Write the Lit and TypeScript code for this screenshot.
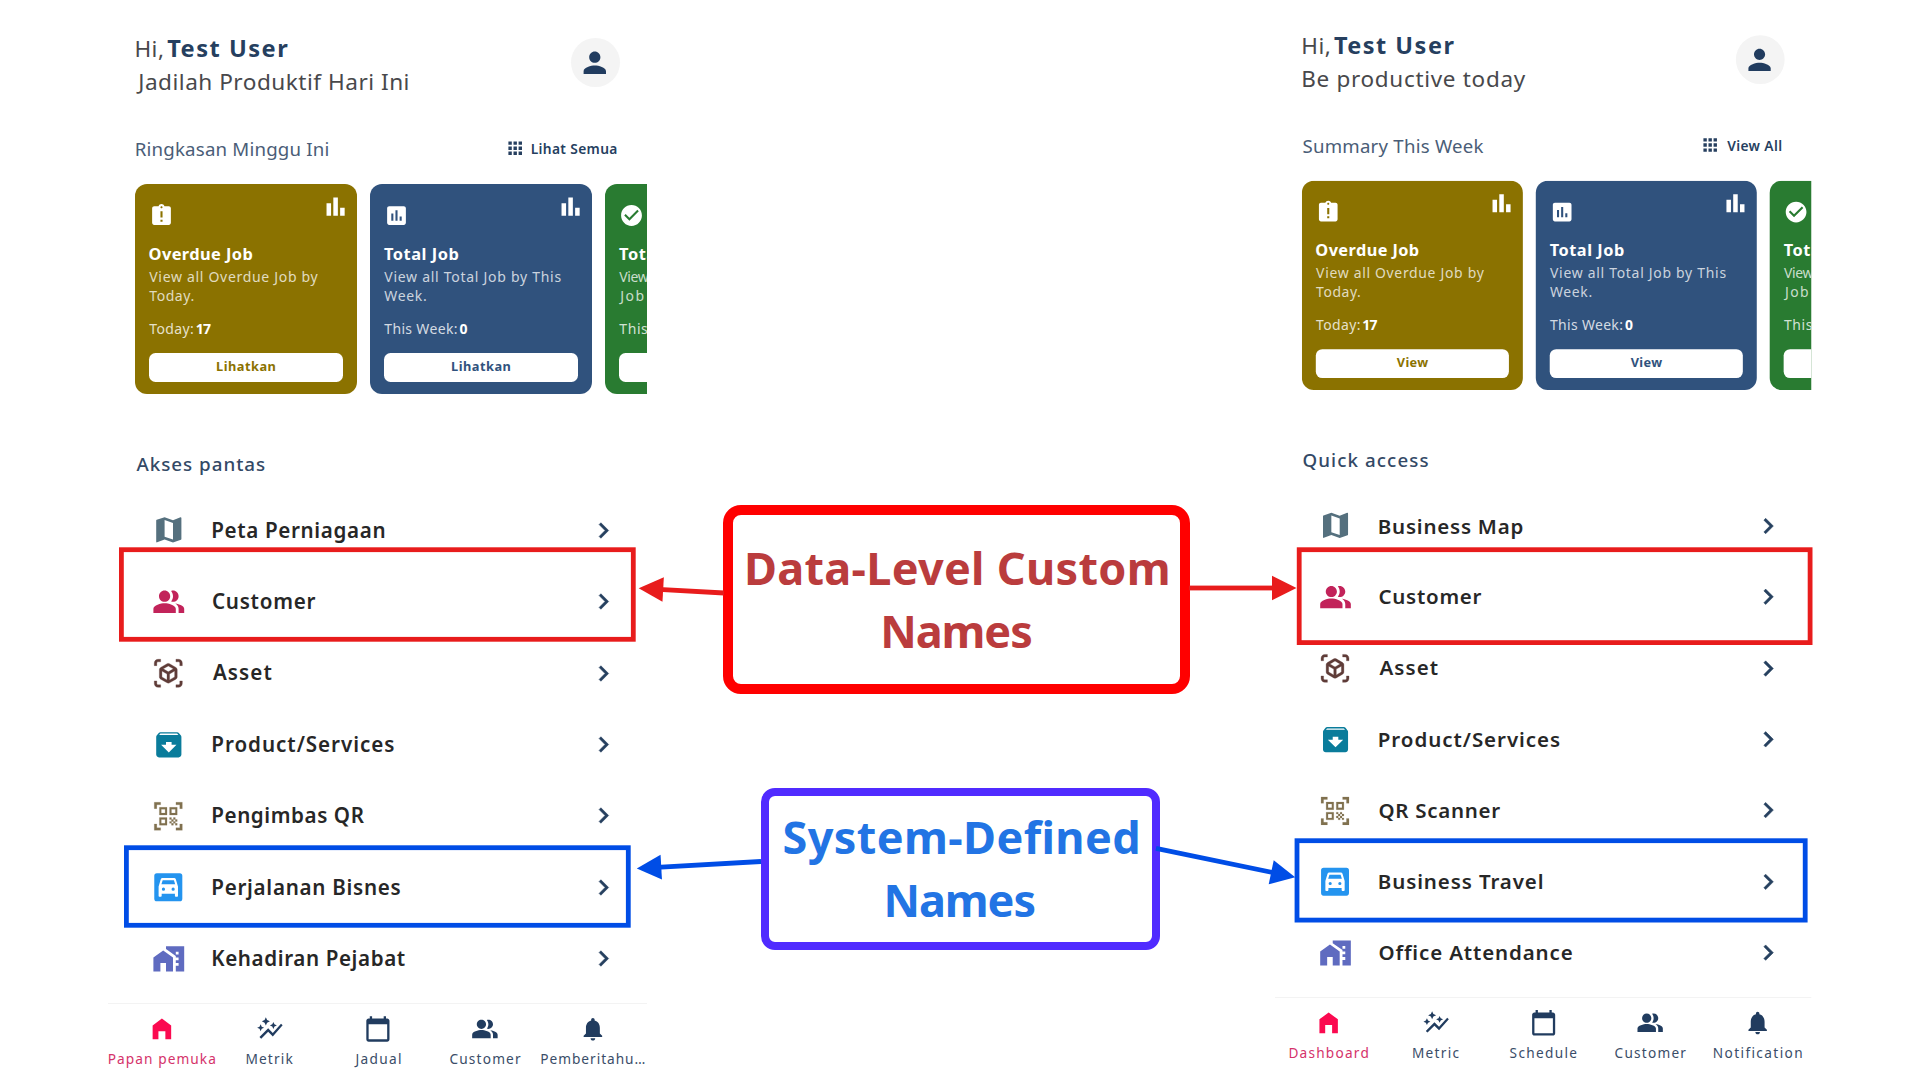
import { LitElement, html, css, svg, nothing } from "lit";
import { customElement, property } from "lit/decorators.js";

/** Text [string, ink width in px]. */
type T = [string, number];

const ICONS: Record<string, string> = {
  person: "M12 12c2.21 0 4-1.79 4-4s-1.79-4-4-4-4 1.79-4 4 1.79 4 4 4zm0 2c-2.67 0-8 1.34-8 4v2h16v-2c0-2.66-5.33-4-8-4z",
  apps: "M4 8h4V4H4v4zm6 12h4v-4h-4v4zm-6 0h4v-4H4v4zm0-6h4v-4H4v4zm6 0h4v-4h-4v4zm6-10v4h4V4h-4zm-6 4h4V4h-4v4zm6 6h4v-4h-4v4zm0 6h4v-4h-4v4z",
  bars: "M4 9h4v11H4zm12 4h4v7h-4zm-6-9h4v16h-4z",
  late: "M19 3h-4.18C14.4 1.84 13.3 1 12 1c-1.3 0-2.4.84-2.82 2H5c-1.1 0-2 .9-2 2v14c0 1.1.9 2 2 2h14c1.1 0 2-.9 2-2V5c0-1.1-.9-2-2-2zm-6 15h-2v-2h2v2zm0-4h-2V8h2v6zm-1-9c-.55 0-1-.45-1-1s.45-1 1-1 1 .45 1 1-.45 1-1 1z",
  chart: "M19 3H5c-1.1 0-2 .9-2 2v14c0 1.1.9 2 2 2h14c1.1 0 2-.9 2-2V5c0-1.1-.9-2-2-2zM9 17H7v-7h2v7zm4 0h-2V7h2v10zm4 0h-2v-4h2v4z",
  check: "M12 2C6.48 2 2 6.48 2 12s4.48 10 10 10 10-4.48 10-10S17.52 2 12 2zm-2 15l-5-5 1.41-1.41L10 14.17l7.59-7.59L19 8l-9 9z",
  map: "M20.5 3l-.16.03L15 5.1 9 3 3.36 4.9c-.21.07-.36.25-.36.48V20.5c0 .28.22.5.5.5l.16-.03L9 18.9l6 2.1 5.64-1.9c.21-.07.36-.25.36-.48V3.5c0-.28-.22-.5-.5-.5zM15 19l-6-2.11V5l6 2.11V19z",
  people: "M16.67 13.13C18.04 14.06 19 15.32 19 17v3h4v-3c0-2.18-3.57-3.47-6.33-3.87zM15 12c2.21 0 4-1.79 4-4s-1.79-4-4-4c-.47 0-.91.1-1.33.24C14.5 5.27 15 6.58 15 8s-.5 2.73-1.33 3.76c.42.14.86.24 1.33.24zM9 12c2.21 0 4-1.79 4-4s-1.79-4-4-4-4 1.79-4 4 1.79 4 4 4zm0 1c-2.67 0-8 1.34-8 4v3h16v-3c0-2.66-5.33-4-8-4z",
  asset: "M3 4c0-.55.45-1 1-1h2V1H4C2.34 1 1 2.34 1 4v2h2V4zM3 20v-2H1v2c0 1.66 1.34 3 3 3h2v-2H4c-.55 0-1-.45-1-1zM20 1h-2v2h2c.55 0 1 .45 1 1v2h2V4c0-1.66-1.34-3-3-3zM21 20c0 .55-.45 1-1 1h-2v2h2c1.66 0 3-1.34 3-3v-2h-2v2zM19 14.87V9.13c0-.72-.38-1.38-1-1.73l-5-2.88c-.31-.18-.65-.27-1-.27s-.69.09-1 .27L6 7.39c-.62.36-1 1.02-1 1.74v5.74c0 .72.38 1.38 1 1.73l5 2.88c.31.18.65.27 1 .27s.69-.09 1-.27l5-2.88c.62-.35 1-1.01 1-1.73zM11 17.17l-4-2.3v-4.63l4 2.33v4.6zM12 10.84L8.04 8.53 12 6.25l3.96 2.28L12 10.84zM17 14.87l-4 2.3v-4.6l4-2.33v4.63z",
  archive: "M20.54 5.23l-1.39-1.68C18.88 3.21 18.47 3 18 3H6c-.47 0-.88.21-1.16.55L3.46 5.23C3.17 5.57 3 6.02 3 6.5V19c0 1.1.9 2 2 2h14c1.1 0 2-.9 2-2V6.5c0-.48-.17-.93-.46-1.27zM12 17.5L6.5 12H10v-2h4v2h3.5L12 17.5zM5.12 5l.81-1h12l.94 1H5.12z",
  qr: "M9.5 6.5v3h-3v-3h3M11 5H5v6h6V5zM9.5 14.5v3h-3v-3h3M11 13H5v6h6v-6zM17.5 6.5v3h-3v-3h3M19 5h-6v6h6V5zM13 13h1.5v1.5H13V13zM14.5 14.5H16V16h-1.5v-1.5zM16 13h1.5v1.5H16V13zM13 16h1.5v1.5H13V16zM14.5 17.5H16V19h-1.5v-1.5zM16 16h1.5v1.5H16V16zM17.5 14.5H19V16h-1.5v-1.5zM17.5 17.5H19V19h-1.5v-1.5zM23 6h-2V3h-3V1h5v5zM23 23v-5h-2v3h-3v2h5zM1 23h5v-2H3v-3H1v5zM1 1v5h2V3h3V1H1z",
  car: "M3 1h18a2 2 0 0 1 2 2v18a2 2 0 0 1-2 2H3a2 2 0 0 1-2-2V3a2 2 0 0 1 2-2zM17.9 5.7C17.7 5.1 17.2 4.8 16.6 4.8H7.4c-.6 0-1.1.3-1.3.9L4.4 11.4v7.2c0 .4.3.8.8.8h.8c.4 0 .8-.4.8-.8v-1.6h10.4v1.6c0 .4.4.8.8.8h.8c.5 0 .8-.4.8-.8v-7.2zM7.6 6.5h8.8l1 3.2H6.6zM8.2 14.7a1.25 1.25 0 1 1 0-2.5 1.25 1.25 0 0 1 0 2.5zM15.8 14.7a1.25 1.25 0 1 1 0-2.5 1.25 1.25 0 0 1 0 2.5z",
  work: "M1 11v10h5v-6h4v6h5V11L8 6l-7 5zM10 3v1.97l7 5V11h2v2h-2v2h2v2h-2v4h6V3H10zm9 6h-2V7h2v2z",
  chevron: "M10 6L8.59 7.41 13.17 12l-4.58 4.59L10 18l6-6z",
  home: "M12 3L4 9v12h5v-7h6v7h5V9z",
  metric: "M14.06 9.94L12 9l2.06-.94L15 6l.94 2.06L18 9l-2.06.94L15 12zM4 14l.94-2.06L7 11l-2.06-.94L4 8l-.94 2.06L1 11l2.06.94zM8.5 9l1.09-2.41L12 5.5 9.59 4.41 8.5 2 7.41 4.41 5 5.5l2.41 1.09zM4.5 20.5l6-6.01 4 4L23 8.93l-1.41-1.41-7.09 7.97-4-4L3 19z",
  calendar: "M20 3h-1V1h-2v2H7V1H5v2H4c-1.1 0-2 .9-2 2v16c0 1.1.9 2 2 2h16c1.1 0 2-.9 2-2V5c0-1.1-.9-2-2-2zm0 18H4V8h16v13z",
  bell: "M12 22c1.1 0 2-.9 2-2h-4c0 1.1.89 2 2 2zm6-6v-5c0-3.07-1.64-5.64-4.5-6.32V4c0-.83-.67-1.5-1.5-1.5s-1.5.67-1.5 1.5v.68C7.63 5.36 6 7.92 6 11v5l-2 2v1h16v-1l-2-2z",
};

const icon = (name: string, cls: string) => html`<svg class="icon ${cls}" viewBox="0 0 24 24">
  ${svg`<path fill-rule="evenodd" d=${ICONS[name]}></path>`}
</svg>`;

/** Glyph bounds come back in whole pixels, so runs are measured enlarged. */
const MEASURE_SCALE = 20;

/** Tracks its text out (or in) so that the ink of the run fills the given width. */
@customElement("fit-text")
export class FitText extends LitElement {
  @property() text = "";
  @property({ type: Number }) width = 0;

  static styles = css`
    :host { display: inline-block; white-space: pre; }
    span { display: block; }
  `;

  firstUpdated() {
    this.fit();
    document.fonts?.ready.then(() => this.fit());
  }

  private fit() {
    const run = this.renderRoot.querySelector("span") as HTMLElement;
    const s = getComputedStyle(run);
    const ctx = document.createElement("canvas").getContext("2d")!;
    ctx.font = `${s.fontWeight} ${parseFloat(s.fontSize) * MEASURE_SCALE}px ${s.fontFamily}`;
    const m = ctx.measureText(this.text);
    const before = -m.actualBoundingBoxLeft / MEASURE_SCALE;
    const after = (m.width - m.actualBoundingBoxRight) / MEASURE_SCALE;
    const ink = m.width / MEASURE_SCALE - before - after;
    const gap = this.text.length > 1 ? (this.width - ink) / (this.text.length - 1) : 0;
    run.style.letterSpacing = `${gap.toFixed(3)}px`;
    run.style.marginLeft = `${(-before).toFixed(3)}px`;
    run.style.marginRight = `${(-gap - after).toFixed(3)}px`;
  }

  render() {
    return html`<span>${this.text}</span>`;
  }
}

const fit = ([text, width]: T, cls = "") =>
  html`<fit-text class=${cls} .text=${text} .width=${width}></fit-text>`;

interface Card { tone: string; icon: string; title: T; lines: T[]; label: T; value?: T; button?: T; }
interface Row { icon: string; label: T; }
interface Phone { subtitle: T; summary: T; viewAll: T; cards: Card[]; quick: T; rows: Row[]; tabs: Row[]; }

const cards = (button: T): Card[] => [
  { tone: "gold", icon: "late", title: ["Overdue Job", 103], lines: [["View all Overdue Job by", 168.5], ["Today.", 44]], label: ["Today:", 43.6], value: ["17", 14.4], button },
  { tone: "blue", icon: "chart", title: ["Total Job", 74], lines: [["View all Total Job by This", 176.3], ["Week.", 41.5]], label: ["This Week:", 72.3], value: ["0", 9], button },
  { tone: "green", icon: "check", title: ["Tota", 36], lines: [["View", 29.5], ["Job", 24]], label: ["This", 28] },
];

const LEFT: Phone = {
  subtitle: ["Jadilah Produktif Hari Ini", 271.4],
  summary: ["Ringkasan Minggu Ini", 191.6],
  viewAll: ["Lihat Semua", 84.8],
  cards: cards(["Lihatkan", 58]),
  quick: ["Akses pantas", 128.2],
  rows: [
    { icon: "map", label: ["Peta Perniagaan", 171.5] },
    { icon: "people", label: ["Customer", 102.3] },
    { icon: "asset", label: ["Asset", 58.7] },
    { icon: "archive", label: ["Product/Services", 180.8] },
    { icon: "qr", label: ["Pengimbas QR", 151] },
    { icon: "car", label: ["Perjalanan Bisnes", 187] },
    { icon: "work", label: ["Kehadiran Pejabat", 192] },
  ],
  tabs: [
    { icon: "home", label: ["Papan pemuka", 106] },
    { icon: "metric", label: ["Metrik", 46] },
    { icon: "calendar", label: ["Jadual", 46] },
    { icon: "people", label: ["Customer", 70.6] },
    { icon: "bell", label: ["Pemberitahu…", 103] },
  ],
};

const RIGHT: Phone = {
  subtitle: ["Be productive today", 223],
  summary: ["Summary This Week", 181],
  viewAll: ["View All", 54.2],
  cards: cards(["View", 31.4]),
  quick: ["Quick access", 125.2],
  rows: [
    { icon: "map", label: ["Business Map", 143.6] },
    { icon: "people", label: ["Customer", 102.3] },
    { icon: "asset", label: ["Asset", 58.7] },
    { icon: "archive", label: ["Product/Services", 180.8] },
    { icon: "qr", label: ["QR Scanner", 121] },
    { icon: "car", label: ["Business Travel", 163.6] },
    { icon: "work", label: ["Office Attendance", 193.4] },
  ],
  tabs: [
    { icon: "home", label: ["Dashboard", 78.4] },
    { icon: "metric", label: ["Metric", 45.6] },
    { icon: "calendar", label: ["Schedule", 66.4] },
    { icon: "people", label: ["Customer", 71] },
    { icon: "bell", label: ["Notification", 88] },
  ],
};

@customElement("phone-screen")
export class PhoneScreen extends LitElement {
  @property({ attribute: false }) data!: Phone;

  static styles = css`
    :host { display: flex; flex-direction: column; width: 539px; height: 1080px; overflow: hidden; color: #334966; }
    * { box-sizing: border-box; }
    .icon { display: block; flex: none; fill: currentColor; }
    .header { display: flex; justify-content: space-between; padding: 32px 27px 0 28.5px; height: 98px; }
    .hello { display: flex; flex-direction: column; align-items: flex-start; font-size: 22.6px; line-height: 33px; color: #48484b; font-weight: 400; }
    .greet { display: flex; gap: 5px; }
    .name { font-weight: 700; color: #263f5f; font-size: 23.6px; }
    .avatar { display: grid; place-items: center; width: 49.5px; height: 49.5px; margin-top: 5.7px; border-radius: 50%; background: #f4f4f4; color: #213c5f; }
    .i-avatar { width: 33.6px; height: 33.6px; }
    .bar { display: flex; justify-content: space-between; align-items: center; height: 26px; margin: 37.7px 30.5px 0 28.5px; font-size: 18.7px; line-height: 26px; font-weight: 400; color: #4a5d77; }
    .all { display: flex; align-items: center; gap: 6.5px; font-size: 13.8px; font-weight: 600; color: #263f5f; }
    .i-apps { width: 20.4px; height: 20.4px; }
    .cards { display: flex; gap: 13.6px; margin: 22.3px 0 0 27.4px; width: 512px; overflow: hidden; }
    .card { flex: none; width: 221.4px; height: 209.7px; padding: 0 13.9px; border-radius: 12px; color: #fff; }
    .gold { background: #8b7200; --tone: #8b7200; }
    .blue { background: #30527d; --tone: #30527d; }
    .green { background: #297b31; --tone: #297b31; }
    .top { display: flex; justify-content: space-between; height: 58.8px; margin-right: -6.5px; }
    .i-card { width: 25px; height: 25px; margin-top: 19.4px; }
    .i-bars { width: 27.2px; height: 27.2px; margin-top: 9.4px; }
    .title { font-size: 16.4px; font-weight: 700; line-height: 22px; }
    .desc { display: flex; flex-direction: column; align-items: flex-start; margin-top: 2px; font-size: 14px; line-height: 19.5px; color: rgba(255, 255, 255, 0.76); }
    .count { display: flex; gap: 3.4px; margin-top: 13.2px; font-size: 14px; line-height: 20px; color: rgba(255, 255, 255, 0.8); }
    .value { font-weight: 700; color: #fff; font-size: 14px; }
    .btn { display: flex; justify-content: center; margin-top: 13.7px; height: 29px; border-radius: 6.5px; background: #fff; color: var(--tone); font-size: 12.8px; line-height: 26.6px; font-weight: 700; }
    .quick { margin: 57.3px 0 0 28.5px; height: 26px; font-size: 18.8px; line-height: 26px; font-weight: 500; }
    .rows { display: flex; flex-direction: column; margin-top: 17.6px; }
    .row { display: flex; align-items: center; height: 71.4px; padding: 0 28px 0 43.6px; }
    .i-row { width: 33.6px; height: 33.6px; }
    .i-row.c-asset, .i-row.c-qr, .i-row.c-car { width: 30.6px; height: 30.6px; margin: 0 1.5px; }
    .label { flex: 1; margin: 0 0 1.2px 27.7px; font-size: 20.6px; font-weight: 600; color: #272727; }
    .i-chevron { width: 31px; height: 31px; color: #26405f; stroke: currentColor; stroke-width: 0.4; }
    .c-map { color: #55707e; }
    .c-people { color: #c2235a; }
    .c-asset { color: #5f3c38; stroke: currentColor; stroke-width: 0.25; }
    .c-archive { color: #0a7c9b; }
    .c-qr { color: #80714f; stroke: currentColor; stroke-width: 0.15; }
    .c-car { color: #2494ef; }
    .c-work { color: #5f6bc0; }
    .tabs { display: grid; grid-template-columns: repeat(5, 107.8px); margin-top: 8.4px; border-top: 1.5px solid #f3f3f3; padding-top: 11.3px; }
    .tab { display: flex; flex-direction: column; align-items: center; gap: 6.3px; font-size: 13.7px; line-height: 20px; color: #3a4d68; }
    .i-tab { width: 27.8px; height: 27.8px; color: #213c5f; }
    .on { color: #d5326a; }
    .on .i-tab { color: #fb0a50; }
  `;

  private card(c: Card) {
    return html`<div class="card ${c.tone}">
      <div class="top">${icon(c.icon, "i-card")}${c.button ? icon("bars", "i-bars") : nothing}</div>
      <div class="title">${fit(c.title)}</div>
      <div class="desc">${c.lines.map((l) => fit(l))}</div>
      <div class="count">${fit(c.label)}${c.value ? fit(c.value, "value") : nothing}</div>
      <div class="btn">${c.button ? fit(c.button) : nothing}</div>
    </div>`;
  }

  render() {
    const d = this.data;
    return html`
      <div class="header">
        <div class="hello">
          <div class="greet">${fit(["Hi,", 26])}${fit(["Test User", 120], "name")}</div>
          ${fit(d.subtitle)}
        </div>
        <div class="avatar">${icon("person", "i-avatar")}</div>
      </div>
      <div class="bar">${fit(d.summary)}<div class="all">${icon("apps", "i-apps")}${fit(d.viewAll)}</div></div>
      <div class="cards">${d.cards.map((c) => this.card(c))}</div>
      <div class="quick">${fit(d.quick)}</div>
      <div class="rows">
        ${d.rows.map((r) => html`<div class="row">
          ${icon(r.icon, `i-row c-${r.icon}`)}
          <div class="label">${fit(r.label)}</div>
          ${icon("chevron", "i-chevron")}
        </div>`)}
      </div>
      <div class="tabs">
        ${d.tabs.map((t, i) => html`<div class="tab ${i === 0 ? "on" : ""}">${icon(t.icon, "i-tab")}${fit(t.label)}</div>`)}
      </div>
    `;
  }
}

const RED = "#e81c1c";
const BLUE = "#004de6";

/** Outline frames: x, y, width, height, colour (outer edges). */
const FRAMES: [number, number, number, number, string][] = [
  [119, 547.3, 516.7, 94.4, RED],
  [1296.8, 547.3, 515.7, 97.7, RED],
  [124, 845.3, 506.7, 82.4, BLUE],
  [1294.6, 838.3, 513, 84.2, BLUE],
];

/** Arrows: start x, y, tip x, y, colour. */
const ARROWS: [number, number, number, number, string][] = [
  [724, 593, 638.7, 588.2, RED],
  [1189, 588, 1296.5, 588, RED],
  [761, 861.5, 636.8, 868.5, BLUE],
  [1156, 848.3, 1295.2, 877.2, BLUE],
];

@customElement("app-root")
export class AppRoot extends LitElement {
  static styles = css`
    :host { display: block; width: 1920px; height: 1080px; overflow: hidden; background: #fff; font-family: "Noto Sans", "Open Sans", sans-serif; }
    .stage { position: relative; display: flex; width: 1920px; height: 1080px; padding-left: 108px; box-sizing: border-box; }
    .left, .right { flex: none; }
    .right { margin-left: 628px; transform: translateY(-2.7px) scale(0.9954, 0.9967); transform-origin: 0 0; }
    .marks { position: absolute; inset: 0; width: 1920px; height: 1080px; }
    .note { position: absolute; box-sizing: border-box; display: flex; flex-direction: column; align-items: center; font-size: 45px; line-height: 63px; font-weight: 700; }
    .custom { left: 723px; top: 505px; width: 467px; height: 189.4px; border: 10px solid #ff0000; border-radius: 18px; color: #ba3c3d; padding: 21.3px 0 0 2px; }
    .system { left: 760.5px; top: 788px; width: 399.5px; height: 161.7px; border: 8.7px solid #502bff; border-radius: 14px; color: #2274e4; padding: 9.2px 0 0 1px; }
  `;

  private arrow([x1, y1, x2, y2, color]: [number, number, number, number, string]) {
    const len = Math.hypot(x2 - x1, y2 - y1);
    const angle = (Math.atan2(y2 - y1, x2 - x1) * 180) / Math.PI;
    return svg`<g transform="translate(${x1} ${y1}) rotate(${angle})" fill=${color}>
      <rect x="0" y="-2.4" width=${len - 20} height="4.8"></rect>
      <path d="M${len} 0 L${len - 24.5} -12.3 V12.3 Z"></path>
    </g>`;
  }

  render() {
    return html`<div class="stage">
      <phone-screen class="left" .data=${LEFT}></phone-screen>
      <phone-screen class="right" .data=${RIGHT}></phone-screen>
      <div class="note custom">${fit(["Data-Level Custom", 420])}${fit(["Names", 147.5])}</div>
      <div class="note system">${fit(["System-Defined", 353.5])}${fit(["Names", 147.5])}</div>
      <svg class="marks" viewBox="0 0 1920 1080">
        ${FRAMES.map(([x, y, w, h, c]) => svg`<rect x=${x + 2.4} y=${y + 2.4} width=${w - 4.8} height=${h - 4.8} fill="none" stroke=${c} stroke-width="4.8"></rect>`)}
        ${ARROWS.map((a) => this.arrow(a))}
      </svg>
    </div>`;
  }
}
